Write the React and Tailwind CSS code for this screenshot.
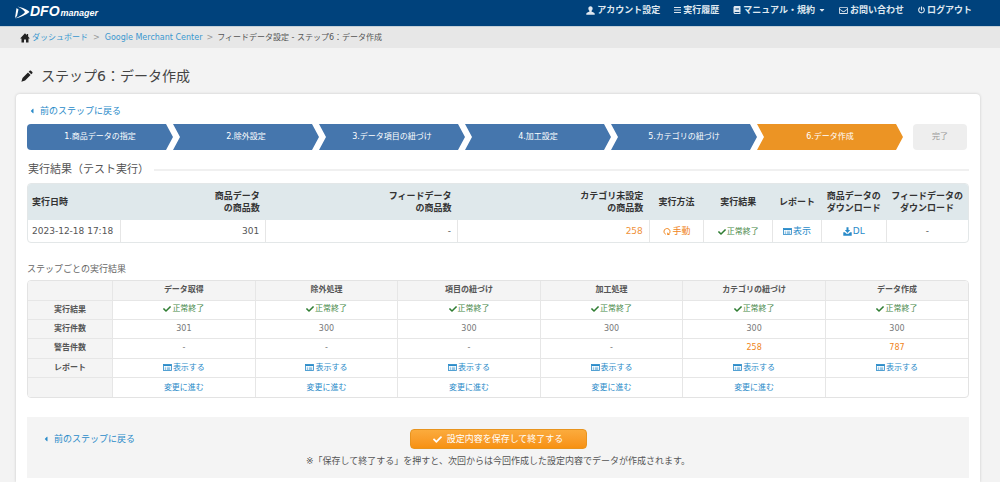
import React from 'react';
import { FaBars, FaBook, FaCaretDown, FaCaretLeft, FaCheck, FaPowerOff, FaRegEnvelope } from 'react-icons/fa';

const steps = [
  '1.商品データの指定',
  '2.除外設定',
  '3.データ項目の紐づけ',
  '4.加工設定',
  '5.カテゴリの紐づけ',
  '6.データ作成',
];

const stepResults = [
  { name: 'データ取得', count: '301', warnings: '-', editable: true },
  { name: '除外処理', count: '300', warnings: '-', editable: true },
  { name: '項目の紐づけ', count: '300', warnings: '-', editable: true },
  { name: '加工処理', count: '300', warnings: '-', editable: true },
  { name: 'カテゴリの紐づけ', count: '300', warnings: '258', editable: true },
  { name: 'データ作成', count: '300', warnings: '787', editable: false },
];

const UserIcon = () => (
  <svg className="w-[9px] h-[9px]" viewBox="0 0 16 16" fill="currentColor">
    <path d="M8 0.5c2.4 0 3.8 1.7 3.8 4.1 0 1.700-.8 3.200-1.800 4v1.600c1.800.8 5.500 1.800 5.500 3.600V15.500H.5v-1.700c0-1.800 3.700-2.800 5.500-3.600V8.600c-1-.8-1.800-2.300-1.800-4C4.200 2.200 5.600.5 8 .5z" />
  </svg>
);

const HomeIcon = () => (
  <svg className="w-[10px] h-[10px] mr-[2px] text-[#222]" viewBox="0 0 16 16" fill="currentColor">
    <path d="M8 .5l2.800 2.900V1.500h2.200v4.200L15.800 8.700H13.600V15H9.600v-4.500H6.400V15H2.400V8.700H.2z" />
  </svg>
);

const PencilIcon = () => (
  <svg className="w-3 h-3" viewBox="0 0 16 16" fill="currentColor">
    <path d="M11.600.9c.5-.5 1.200-.5 1.700 0l1.800 1.800c.5.5.5 1.200 0 1.700L13.700 5.800 10.200 2.300zM9.300 3.200l3.500 3.500-7.300 7.300L0.500 15.500 2 10.500z" />
  </svg>
);

const RepeatIcon = () => (
  <svg className="w-2 h-[9px]" viewBox="0 0 16 16" fill="none" stroke="currentColor" strokeWidth="2">
    <path d="M5.500 13.500A6 6 0 1 1 12 12.500" />
    <path d="M8.500 9.500v5.500h5.500z" fill="currentColor" stroke="none" />
  </svg>
);

const ReportIcon = () => (
  <svg className="w-[9px] h-[7px]" viewBox="0 0 18 14">
    <rect x="1" y="1" width="16" height="12" fill="none" stroke="currentColor" strokeWidth="1.600" />
    <path d="M1 1h16v3H1z" fill="currentColor" />
    <path d="M3.500 6.500h2.500M3.500 9h2.500M3.500 11h2.500M7.500 6.500h7M7.500 9h7M7.500 11h7" stroke="currentColor" />
  </svg>
);

const DownloadIcon = () => (
  <svg className="w-[9px] h-[9px]" viewBox="0 0 16 16" fill="currentColor">
    <path d="M6.200 0.500h3.600v5h3L8 10.500 3.200 5.500h3z" />
    <path d="M0.500 9.500h3l2.500 2.700h4l2.500-2.700h3v6H.5z" />
  </svg>
);

const Logo = () => (
  <a href="#" className="flex items-center text-white">
    <svg className="w-[15px] h-[13px]" viewBox="0 0 30 26" fill="currentColor">
      <path d="M5 1C15 3 25 7 29 12 21 18 11 23 0 25 11 20 18 16 20 12 17 8 12 4 5 1z" />
      <path d="M3 4l4 3-3 13-4 4z" />
    </svg>
    <span className="flex items-baseline font-['Liberation_Sans',sans-serif] font-bold italic">
      <span className="text-[14px] leading-[14px]">DFO</span>
      <span className="text-[9px] leading-[14px] ml-px">manager</span>
    </span>
  </a>
);

const BackLink = () => (
  <a href="#" className="inline-flex items-center gap-[5px] text-[9px] leading-3 text-[#2a8bc9]">
    <FaCaretLeft className="w-[6px] h-2" />
    前のステップに戻る
  </a>
);

const Success = () => (
  <span className="inline-flex items-center gap-px align-middle text-[8px] leading-[10px] text-[#468847]">
    <FaCheck className="w-2 h-2 text-[#2f7d32]" />
    正常終了
  </span>
);

const IconLink = ({ icon, children }) => (
  <a href="#" className="inline-flex items-center gap-px align-middle text-[#2a8bc9]">
    {icon}
    {children}
  </a>
);

const NavItem = ({ icon, label, caret }) => (
  <a href="#" className="flex items-center gap-[2px] text-[9px] leading-3 font-bold text-[#dfe8f0]">
    {icon}
    {label}
    {caret && <FaCaretDown className="w-[6px] h-2 ml-[2px]" />}
  </a>
);

const Header = () => (
  <header className="flex items-start justify-between h-[26px] pl-[15px] pr-7 pt-1 bg-[#00427c]">
    <Logo />
    <nav className="flex gap-[14px]">
      <NavItem icon={<UserIcon />} label="アカウント設定" />
      <NavItem icon={<FaBars className="w-[7px] h-2" />} label="実行履歴" />
      <NavItem icon={<FaBook className="w-2 h-2" />} label="マニュアル・規約" caret />
      <NavItem icon={<FaRegEnvelope className="w-[9px] h-[9px]" />} label="お問い合わせ" />
      <NavItem icon={<FaPowerOff className="w-[7px] h-2" />} label="ログアウト" />
    </nav>
  </header>
);

const Breadcrumb = () => (
  <div className="flex items-center h-[22px] pl-5 border-t border-[#c5d0d8] bg-[#e7e7e7] text-[8px]">
    <HomeIcon />
    <a href="#" className="text-[#3a97cf]">ダッシュボード</a>
    <span className="mx-[5px] text-[#999]">&gt;</span>
    <a href="#" className="text-[#3a97cf]">Google Merchant Center</a>
    <span className="mx-1 text-[#999]">&gt;</span>
    <span>フィードデータ設定 - ステップ6：データ作成</span>
  </div>
);

const StepBar = () => (
  <div className="flex h-[26px] mt-[7px] pr-[2px] text-[8px] text-white">
    {steps.map((step, i) => {
      const shape =
        i === 0
          ? 'rounded-l-sm [clip-path:polygon(0_0,calc(100%-7px)_0,100%_50%,calc(100%-7px)_100%,0_100%)]'
          : '[clip-path:polygon(0_0,calc(100%-7px)_0,100%_50%,calc(100%-7px)_100%,0_100%,7px_50%)]';
      const color = i === steps.length - 1 ? 'bg-[#ec9424]' : 'bg-[#4576ad]';
      return (
        <div key={step} className={`flex flex-1 items-center justify-center ${shape} ${color}`}>
          {step}
        </div>
      );
    })}
    <div className="flex items-center justify-center w-[54px] ml-[10px] rounded-sm bg-[#eee] text-[#999]">完了</div>
  </div>
);

const RunTable = () => (
  <div className="mt-[5px] rounded-sm border border-[#e3e7e8] overflow-hidden">
    <table className="w-full table-fixed text-[9px] leading-3">
      <colgroup>
        <col className="w-[9.8%]" />
        <col className="w-[15.5%]" />
        <col className="w-[20.4%]" />
        <col className="w-[20.4%]" />
        <col className="w-[5.8%]" />
        <col className="w-[7.3%]" />
        <col className="w-[5.2%]" />
        <col className="w-[6.9%]" />
        <col className="w-[8.7%]" />
      </colgroup>
      <thead>
        <tr className="h-9 bg-[#dfe8eb] text-[#333]">
          <th className="pl-1 text-left">実行日時</th>
          <th className="pr-[6px] text-right">商品データ<br />の商品数</th>
          <th className="pr-[6px] text-right">フィードデータ<br />の商品数</th>
          <th className="pr-[6px] text-right">カテゴリ未設定<br />の商品数</th>
          <th>実行方法</th>
          <th>実行結果</th>
          <th>レポート</th>
          <th>商品データの<br />ダウンロード</th>
          <th>フィードデータの<br />ダウンロード</th>
        </tr>
      </thead>
      <tbody>
        <tr className="h-[22px] text-center divide-x divide-[#e6e6e6]">
          <td className="pl-1 text-left whitespace-nowrap">2023-12-18 17:18</td>
          <td className="pr-[6px] text-right">301</td>
          <td className="pr-[6px] text-right">-</td>
          <td className="pr-[6px] text-right text-[#f0923a]">258</td>
          <td>
            <span className="inline-flex items-center gap-[2px] align-middle text-[#f0851c]"><RepeatIcon />手動</span>
          </td>
          <td><Success /></td>
          <td><IconLink icon={<ReportIcon />}>表示</IconLink></td>
          <td><IconLink icon={<DownloadIcon />}>DL</IconLink></td>
          <td>-</td>
        </tr>
      </tbody>
    </table>
  </div>
);

const Row = ({ label, children }) => (
  <tr className="h-[19px] divide-x divide-[#e6e6e6] border-t border-[#e6e6e6]">
    <th className="bg-[#f4f4f4]">{label}</th>
    {children}
  </tr>
);

const StepTable = () => (
  <div className="mt-[5px] rounded-sm border border-[#e3e3e3] overflow-hidden">
    <table className="w-full h-[116px] table-fixed text-[8px] leading-[10px] text-center">
      <thead>
        <tr className="h-[19px] divide-x divide-[#e6e6e6] bg-[#f4f4f4]">
          <td className="w-[9%]" />
          {stepResults.map((s) => <th key={s.name}>{s.name}</th>)}
        </tr>
      </thead>
      <tbody>
        <Row label="実行結果">
          {stepResults.map((s) => <td key={s.name}><Success /></td>)}
        </Row>
        <Row label="実行件数">
          {stepResults.map((s) => <td key={s.name} className="text-[#777]">{s.count}</td>)}
        </Row>
        <Row label="警告件数">
          {stepResults.map((s) => (
            <td key={s.name} className={s.warnings === '-' ? 'text-[#777]' : 'text-[#f0851c]'}>{s.warnings}</td>
          ))}
        </Row>
        <Row label="レポート">
          {stepResults.map((s) => (
            <td key={s.name}><IconLink icon={<ReportIcon />}>表示する</IconLink></td>
          ))}
        </Row>
        <Row label="">
          {stepResults.map((s) => (
            <td key={s.name}>{s.editable && <a href="#" className="text-[#2a8bc9]">変更に進む</a>}</td>
          ))}
        </Row>
      </tbody>
    </table>
  </div>
);

const App = () => {
  return (
    <div className="flex flex-col min-h-screen bg-[#f3f3f3] text-[#555] font-['DejaVu_Sans','Noto_Sans_CJK_JP',sans-serif]">
      <Header />
      <Breadcrumb />
      <h1 className="flex items-center gap-2 mt-[18px] pl-[21px] text-[14px] leading-5 text-[#444]">
        <span className="text-[#222]"><PencilIcon /></span>
        ステップ6：データ作成
      </h1>
      <main className="flex-1 flex flex-col mt-2 ml-4 mr-5 px-[11px] pt-[11px] pb-1 bg-white rounded-t-sm shadow-[0_0_3px_rgba(0,0,0,0.18)]">
        <div className="flex pl-[2px]"><BackLink /></div>
        <StepBar />
        <div className="flex items-center mt-3 pl-px">
          <h2 className="text-[11px] leading-4">実行結果（テスト実行）</h2>
          <div className="flex-1 ml-[5px] border-t-2 border-[#f0f0f0]" />
        </div>
        <RunTable />
        <h3 className="mt-5 text-[9px] leading-3 text-[#666]">ステップごとの実行結果</h3>
        <StepTable />
        <div className="mt-[19px] pt-3 pb-[11px] bg-[#f4f4f4]">
          <div className="grid grid-cols-[1fr_auto_1fr] items-center">
            <div className="flex pl-4"><BackLink /></div>
            <button
              type="button"
              className="flex items-center justify-center gap-[5px] w-[177px] h-5 rounded-sm border border-[#e8941f] bg-gradient-to-b from-[#fbab3c] to-[#f79110] text-[9px] leading-3 text-white"
            >
              <FaCheck className="w-[9px] h-[9px]" />
              設定内容を保存して終了する
            </button>
          </div>
          <p className="mt-[6px] text-center text-[9px] leading-3">
            ※「保存して終了する」を押すと、次回からは今回作成した設定内容でデータが作成されます。
          </p>
        </div>
      </main>
    </div>
  );
};

export default App;
